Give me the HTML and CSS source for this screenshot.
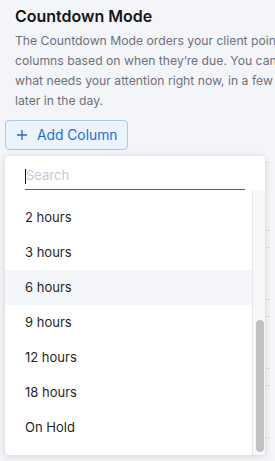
FILE: index.html
```html
<!DOCTYPE html>
<html lang="en">
<head>
  <meta charset="UTF-8" />
  <meta name="viewport" content="width=device-width, initial-scale=1.0"/>
  <title>Countdown Mode</title>
  <link rel="stylesheet" href="styles.css">
</head>
<body>

<div class="page">
  <div class="intro">
    <h1>Countdown Mode</h1>
    <p class="desc">The Countdown Mode orders your client points into<br>columns based on when they’re due. You can see<br>what needs your attention right now, in a few hours, or<br>later in the day.</p>
  </div>

  <button class="add-btn" type="button">
    <svg width="10" height="10" viewBox="0 0 10 10"><path d="M5 0v10M0 5h10" stroke="currentColor" stroke-width="1.3" fill="none"/></svg>
    <span>Add Column</span>
  </button>

  <div class="board">
    <div class="card tall"></div>
    <div class="card"></div>
    <div class="card"></div>
    <div class="card"></div>
  </div>
</div>

<div class="dropdown">
  <div class="search">
    <input type="text" placeholder="Search" />
  </div>
  <div class="list-wrap">
    <ul class="options">
      <li>2 hours</li>
      <li>3 hours</li>
      <li class="active">6 hours</li>
      <li>9 hours</li>
      <li>12 hours</li>
      <li>18 hours</li>
      <li>On Hold</li>
    </ul>
    <div class="track"><div class="thumb"></div></div>
  </div>
</div>

</body>
</html>
```

FILE: styles.css
```css
body {
  margin: 0;
  width: 275px;
  height: 461px;
  overflow: hidden;
  position: relative;
  background-color: #f4f5f9;
  font-family: Inter, "Noto Sans", sans-serif;
}

.page {
  padding: 0 5px;
}

.intro {
  padding: 6px 0 0 10px;
}

h1 {
  margin: 0;
  font-size: 16px;
  line-height: 20px;
  font-weight: 600;
  color: #151515;
}

.desc {
  margin: 5px 0 0 0;
  font-size: 12.2px;
  line-height: 20px;
  color: #6e717b;
  white-space: nowrap;
}

.add-btn {
  display: flex;
  align-items: center;
  gap: 10px;
  height: 30px;
  margin-top: 9px;
  padding: 0 10px 0 11px;
  background-color: #ebf3fd;
  border: 1px solid #a9c8ef;
  border-radius: 4px;
  color: #1c6ed8;
  font-family: inherit;
  font-size: 13.8px;
}

.board {
  margin-top: 12px;
  display: flex;
  flex-direction: column;
  gap: 16px;
}

.card {
  height: 51px;
  border-top: 1px solid #e0e3ea;
  border-bottom: 1px solid #e0e3ea;
}

.card.tall {
  height: 67px;
}

.dropdown {
  position: absolute;
  left: 5px;
  top: 156px;
  width: 260px;
  background-color: #fff;
  border-radius: 4px;
  box-shadow: 0 1px 7px rgba(0,0,0,0.14);
  overflow: hidden;
}

.search {
  position: relative;
  padding: 0 20px;
}

.search::before {
  content: "";
  position: absolute;
  left: 20px;
  top: 13px;
  width: 1px;
  height: 15px;
  background-color: #111;
}

.search input {
  display: block;
  width: 100%;
  height: 34px;
  box-sizing: border-box;
  padding: 5px 0 0 1px;
  border: none;
  border-bottom: 1px solid #1f6dd3;
  outline: none;
  font-family: inherit;
  font-size: 13px;
  color: #222;
}

.search input::placeholder {
  color: #c6c7dc;
}

.list-wrap {
  display: flex;
}

.options {
  flex: 1;
  list-style: none;
  margin: 0;
  padding: 10px 0;
}

.options li {
  height: 35px;
  line-height: 35px;
  padding-left: 20px;
  font-size: 13px;
  color: #1f1f1f;
}

.options li.active {
  background-color: #f5f6fa;
}

.track {
  width: 13px;
  border-left: 1px solid #e6e6e6;
  background-color: #f8f8f8;
  padding: 130px 0 0 3px;
  box-sizing: border-box;
}

.thumb {
  width: 8px;
  height: 132px;
  border-radius: 4px;
  background-color: #c1c1c1;
}
```
